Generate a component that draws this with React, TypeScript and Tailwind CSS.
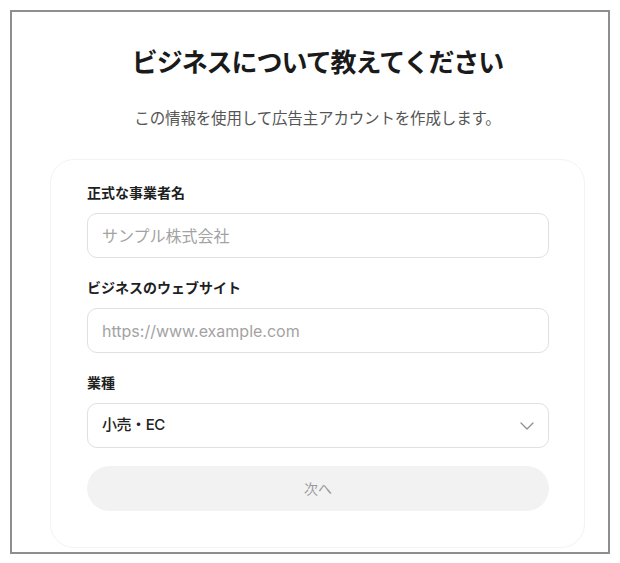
import React, { useState } from "react"
import { ChevronDown } from "lucide-react"

const font = { fontFamily: '"Inter", "Noto Sans CJK JP", sans-serif' }

const Field = ({ label, children }: { label: string; children: React.ReactNode }) => (
  <div className="flex flex-col">
    <label className="text-[14px] leading-5 font-bold text-[#1f1f1f] mb-2.5">{label}</label>
    {children}
  </div>
)

const App = () => {
  const [name, setName] = useState("")
  const [site, setSite] = useState("")
  const [industry, setIndustry] = useState("小売・EC")

  return (
    <div className="p-[10px] bg-white" style={font}>
      <div className="h-[544px] border-2 border-[#8e8e8e] overflow-hidden flex flex-col items-center pl-[15px]">
        <h1 className="mt-[33px] text-[26px] leading-9 font-bold text-[#1a1a1a] tracking-[-0.04em]">
          ビジネスについて教えてください
        </h1>
        <p className="mt-[26px] text-[15.5px] leading-6 text-[#555] tracking-[-0.01em]">
          この情報を使用して広告主アカウントを作成します。
        </p>
        <div className="mt-[28px] w-[535px] h-[389px] rounded-[24px] border border-[#f3f3f3] bg-white pt-[23px] pl-[36px] pr-[35px] flex flex-col gap-5">
          <Field label="正式な事業者名">
            <input
              value={name}
              onChange={(e) => setName(e.target.value)}
              placeholder="サンプル株式会社"
              className="h-[45px] w-full rounded-[10px] border border-[#e0e0e0] px-[14px] text-[16px] text-[#222] placeholder:text-[#a3a3a3] outline-none"
            />
          </Field>
          <Field label="ビジネスのウェブサイト">
            <input
              value={site}
              onChange={(e) => setSite(e.target.value)}
              placeholder="https://www.example.com"
              className="h-[45px] w-full rounded-[10px] border border-[#e0e0e0] px-[14px] text-[16px] text-[#222] placeholder:text-[#a3a3a3] outline-none"
            />
          </Field>
          <Field label="業種">
            <div className="relative">
              <select
                value={industry}
                onChange={(e) => setIndustry(e.target.value)}
                className="appearance-none h-[45px] w-full rounded-[10px] border border-[#e0e0e0] bg-white px-[14px] text-[15px] font-medium text-[#222] outline-none tracking-[-0.03em]"
              >
                <option>小売・EC</option>
                <option>飲食</option>
                <option>サービス</option>
              </select>
              <ChevronDown
                size={24}
                strokeWidth={1.25}
                className="absolute right-[10px] top-1/2 -translate-y-1/2 text-[#8f8f8f] pointer-events-none"
              />
            </div>
          </Field>
          <button
            disabled
            className="mt-[-2px] h-[45px] w-full rounded-full bg-[#f2f2f2] text-[14px] text-[#9a9a9a]"
          >
            次へ
          </button>
        </div>
      </div>
    </div>
  )
}

export default App
